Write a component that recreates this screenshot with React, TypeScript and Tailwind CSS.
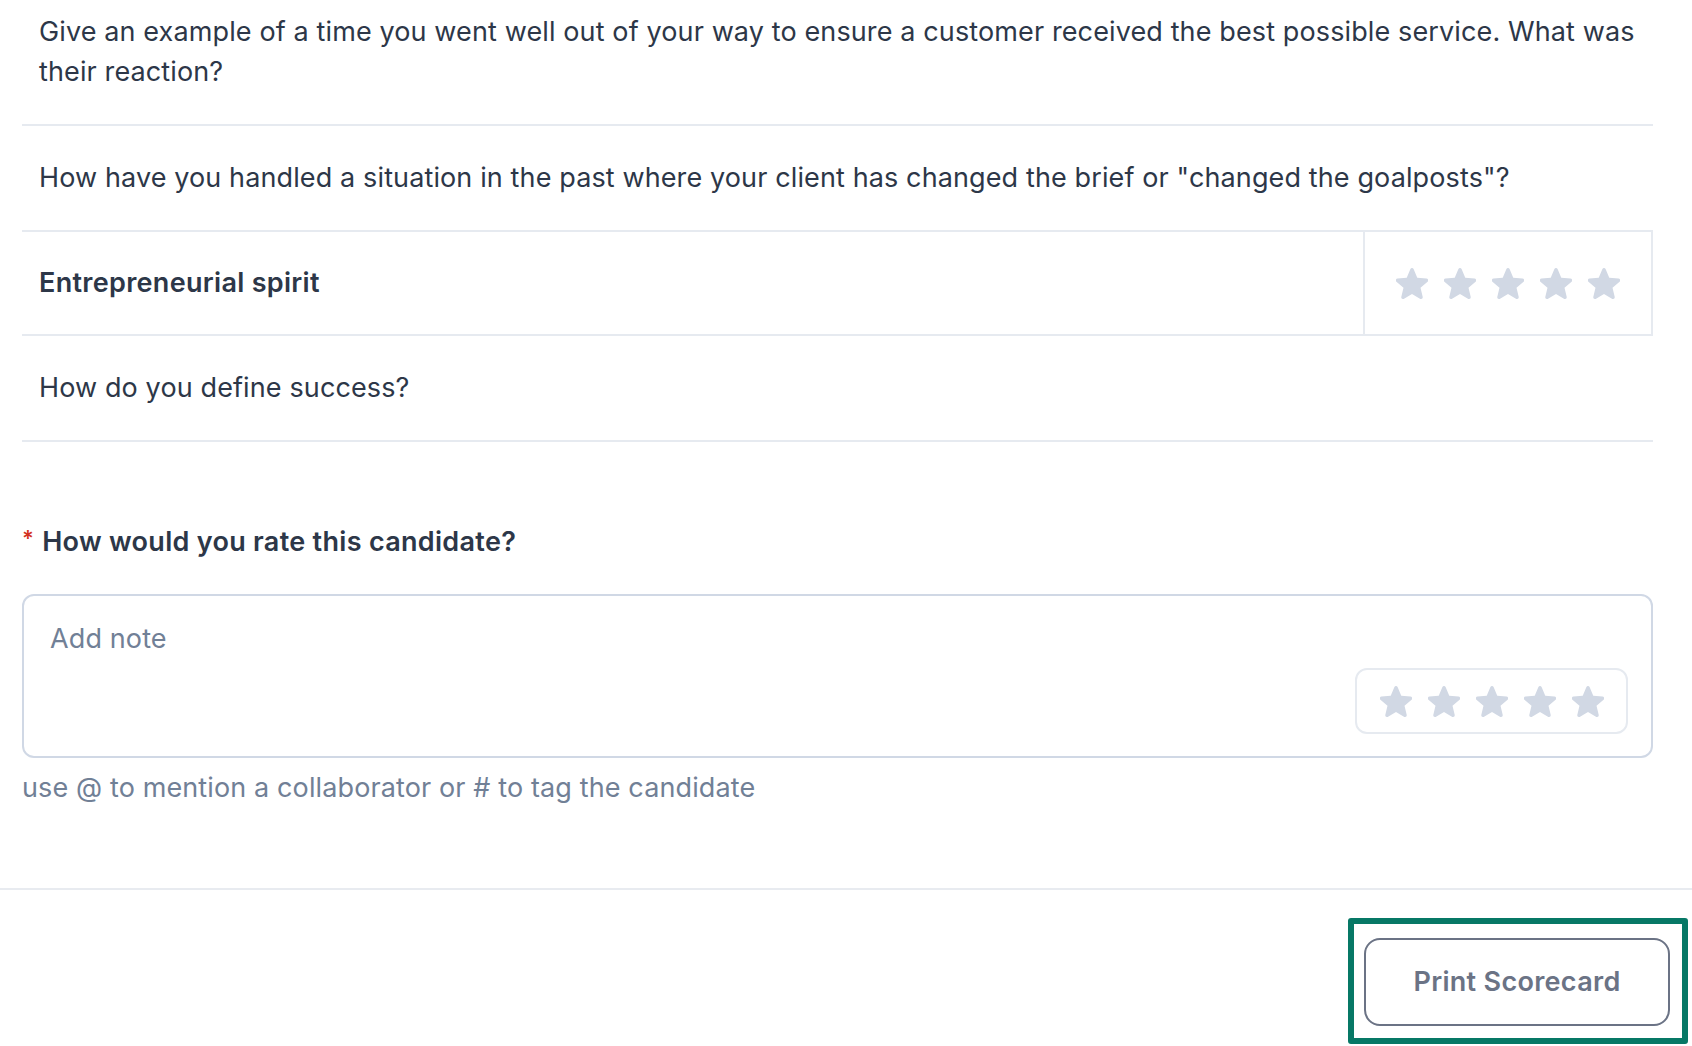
import React from "react";

const Star = () => (
  <svg
    viewBox="1.8 2.3 16.4 15.9"
    className="h-[31px] w-[32px] shrink-0"
    fill="#d1d8e4"
  >
    <path d="M10.868 2.884c-.321-.772-1.415-.772-1.736 0l-1.83 4.401-4.753.381c-.833.067-1.171 1.107-.536 1.651l3.62 3.102-1.106 4.637c-.194.813.691 1.456 1.405 1.02L10 15.591l4.069 2.485c.713.436 1.598-.207 1.404-1.02l-1.106-4.637 3.62-3.102c.635-.544.297-1.584-.536-1.65l-4.752-.382-1.831-4.401z" />
  </svg>
);

const Stars = () => (
  <div className="flex items-center gap-4">
    {[0, 1, 2, 3, 4].map((i) => (
      <Star key={i} />
    ))}
  </div>
);

export default function App() {
  return (
    <main className="min-h-screen w-full bg-white font-['Inter','Liberation_Sans',sans-serif] text-[27px] leading-[40px] tracking-[0.12px] text-[#2d3748]">
      <div className="pl-[22px] pr-[39px]">
        {/* question list */}
        <div className="border-b-2 border-[#e6eaf0] pl-[17px] pr-[6px] pt-3 pb-8">
          Give an example of a time you went well out of your way to ensure a
          customer received the best possible service. What was their reaction?
        </div>
        <div className="border-b-2 border-[#e6eaf0] pl-[17px] pr-[6px] py-8">
          How have you handled a situation in the past where your client has
          changed the brief or "changed the goalposts"?
        </div>
        <div className="flex border-b-2 border-[#e6eaf0]">
          <div className="flex-1 px-[17px] py-[31px] font-semibold tracking-[0.3px]">
            Entrepreneurial spirit
          </div>
          <div className="flex w-[290px] items-center justify-center border-x-2 border-[#e6eaf0]">
            <Stars />
          </div>
        </div>
        <div className="border-b-2 border-[#e6eaf0] px-[17px] py-8">
          How do you define success?
        </div>

        {/* overall rating */}
        <div className="mt-20 flex items-start font-semibold tracking-[0.3px]">
          <span className="mr-[8px] mt-[-4px] text-[22px] text-[#d3311f]">*</span>
          <span>How would you rate this candidate?</span>
        </div>
        <div className="mt-8 flex h-[164px] flex-col rounded-xl border-2 border-[#d0d8e5] pl-[26px] pr-[23px] pt-[23px]">
          <div className="text-[#718096]">Add note</div>
          <div className="mt-[9px] flex h-[66px] w-[273px] items-center justify-center self-end rounded-xl border-2 border-[#e6eaf0]">
            <Stars />
          </div>
        </div>
        <div className="mt-[10px] text-[#718096]">
          use @ to mention a collaborator or # to tag the candidate
        </div>
      </div>

      {/* footer */}
      <div className="mt-20 flex justify-end border-t-2 border-[#e8ebf0] pr-[4px] pt-7">
        <div className="rounded-[3px] border-[6px] border-[#077866] pb-[12px] pl-[10px] pr-[12px] pt-[14px]">
          <button className="flex h-[88px] w-[306px] items-center justify-center rounded-2xl border-2 border-[#6b7385] font-semibold tracking-[0.3px] text-[#6b7385]">
            Print Scorecard
          </button>
        </div>
      </div>
    </main>
  );
}
